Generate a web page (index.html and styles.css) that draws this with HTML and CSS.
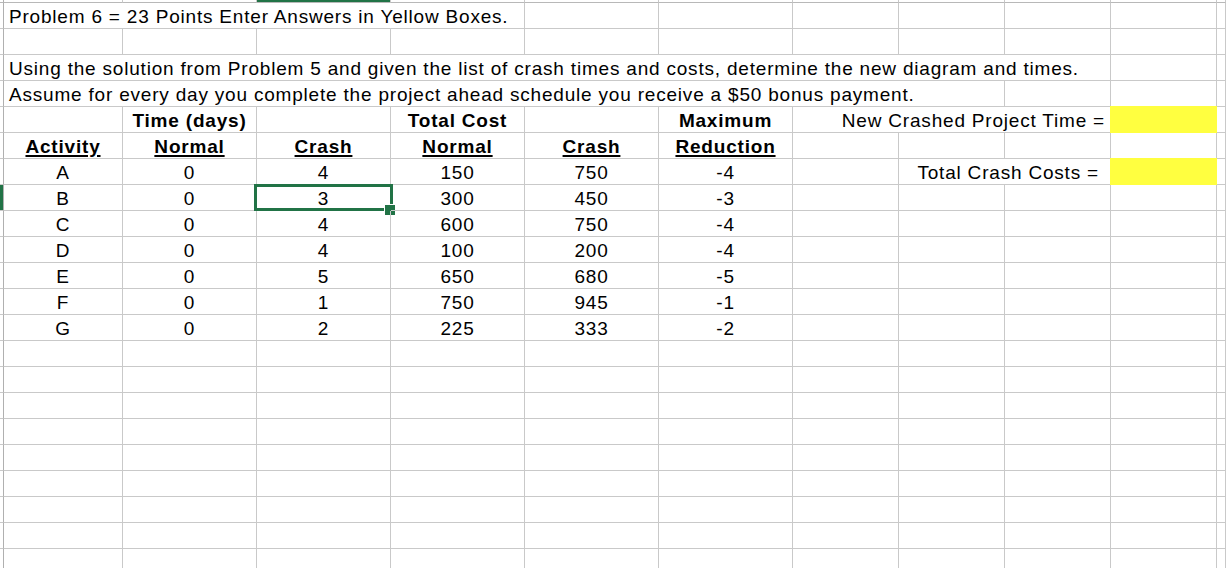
FILE: index.html
```html
<!DOCTYPE html>
<html>
<head>
<meta charset="utf-8">
<title>Problem 6</title>
<link rel="stylesheet" href="styles.css">
</head>
<body>
<div class="sheet">
  <div class="row hdr">
    <div class="c rh"></div><div class="c"></div><div class="c"></div><div class="c sel-col"></div><div class="c"></div><div class="c"></div><div class="c"></div><div class="c"></div><div class="c"></div><div class="c"></div><div class="c"></div><div class="c"></div>
  </div>
  <div class="row">
    <div class="c rh"></div><div class="c left s4">Problem 6 = 23 Points Enter Answers in Yellow Boxes.</div><div class="c"></div><div class="c"></div><div class="c"></div><div class="c"></div><div class="c"></div><div class="c"></div><div class="c"></div>
  </div>
  <div class="row">
    <div class="c rh"></div><div class="c"></div><div class="c"></div><div class="c"></div><div class="c"></div><div class="c"></div><div class="c"></div><div class="c"></div><div class="c"></div><div class="c"></div><div class="c"></div><div class="c"></div>
  </div>
  <div class="row">
    <div class="c rh"></div><div class="c left s9">Using the solution from Problem 5 and given the list of crash times and costs, determine the new diagram and times.</div><div class="c"></div><div class="c"></div>
  </div>
  <div class="row">
    <div class="c rh"></div><div class="c left s8">Assume for every day you complete the project ahead schedule you receive a $50 bonus payment.</div><div class="c"></div><div class="c"></div><div class="c"></div>
  </div>
  <div class="row">
    <div class="c rh"></div><div class="c"></div><div class="c b">Time (days)</div><div class="c"></div><div class="c b">Total Cost</div><div class="c"></div><div class="c b">Maximum</div><div class="c right s3">New Crashed Project Time =</div><div class="c answer"></div><div class="c"></div>
  </div>
  <div class="row">
    <div class="c rh"></div><div class="c b u">Activity</div><div class="c b u">Normal</div><div class="c b u">Crash</div><div class="c b u">Normal</div><div class="c b u">Crash</div><div class="c b u">Reduction</div><div class="c"></div><div class="c"></div><div class="c"></div><div class="c"></div><div class="c"></div>
  </div>
  <div class="row">
    <div class="c rh"></div><div class="c">A</div><div class="c">0</div><div class="c">4</div><div class="c">150</div><div class="c">750</div><div class="c">-4</div><div class="c"></div><div class="c right s2">Total Crash Costs =&nbsp;</div><div class="c answer"></div><div class="c"></div>
  </div>
  <div class="row">
    <div class="c rh rh-sel"></div><div class="c">B</div><div class="c">0</div><div class="c active">3<span class="sel-box"><span class="handle"></span></span></div><div class="c">300</div><div class="c">450</div><div class="c">-3</div><div class="c"></div><div class="c"></div><div class="c"></div><div class="c"></div><div class="c"></div>
  </div>
  <div class="row">
    <div class="c rh"></div><div class="c">C</div><div class="c">0</div><div class="c">4</div><div class="c">600</div><div class="c">750</div><div class="c">-4</div><div class="c"></div><div class="c"></div><div class="c"></div><div class="c"></div><div class="c"></div>
  </div>
  <div class="row">
    <div class="c rh"></div><div class="c">D</div><div class="c">0</div><div class="c">4</div><div class="c">100</div><div class="c">200</div><div class="c">-4</div><div class="c"></div><div class="c"></div><div class="c"></div><div class="c"></div><div class="c"></div>
  </div>
  <div class="row">
    <div class="c rh"></div><div class="c">E</div><div class="c">0</div><div class="c">5</div><div class="c">650</div><div class="c">680</div><div class="c">-5</div><div class="c"></div><div class="c"></div><div class="c"></div><div class="c"></div><div class="c"></div>
  </div>
  <div class="row">
    <div class="c rh"></div><div class="c">F</div><div class="c">0</div><div class="c">1</div><div class="c">750</div><div class="c">945</div><div class="c">-1</div><div class="c"></div><div class="c"></div><div class="c"></div><div class="c"></div><div class="c"></div>
  </div>
  <div class="row">
    <div class="c rh"></div><div class="c">G</div><div class="c">0</div><div class="c">2</div><div class="c">225</div><div class="c">333</div><div class="c">-2</div><div class="c"></div><div class="c"></div><div class="c"></div><div class="c"></div><div class="c"></div>
  </div>
  <div class="row"><div class="c rh"></div><div class="c"></div><div class="c"></div><div class="c"></div><div class="c"></div><div class="c"></div><div class="c"></div><div class="c"></div><div class="c"></div><div class="c"></div><div class="c"></div><div class="c"></div></div>
  <div class="row"><div class="c rh"></div><div class="c"></div><div class="c"></div><div class="c"></div><div class="c"></div><div class="c"></div><div class="c"></div><div class="c"></div><div class="c"></div><div class="c"></div><div class="c"></div><div class="c"></div></div>
  <div class="row"><div class="c rh"></div><div class="c"></div><div class="c"></div><div class="c"></div><div class="c"></div><div class="c"></div><div class="c"></div><div class="c"></div><div class="c"></div><div class="c"></div><div class="c"></div><div class="c"></div></div>
  <div class="row"><div class="c rh"></div><div class="c"></div><div class="c"></div><div class="c"></div><div class="c"></div><div class="c"></div><div class="c"></div><div class="c"></div><div class="c"></div><div class="c"></div><div class="c"></div><div class="c"></div></div>
  <div class="row"><div class="c rh"></div><div class="c"></div><div class="c"></div><div class="c"></div><div class="c"></div><div class="c"></div><div class="c"></div><div class="c"></div><div class="c"></div><div class="c"></div><div class="c"></div><div class="c"></div></div>
  <div class="row"><div class="c rh"></div><div class="c"></div><div class="c"></div><div class="c"></div><div class="c"></div><div class="c"></div><div class="c"></div><div class="c"></div><div class="c"></div><div class="c"></div><div class="c"></div><div class="c"></div></div>
  <div class="row"><div class="c rh"></div><div class="c"></div><div class="c"></div><div class="c"></div><div class="c"></div><div class="c"></div><div class="c"></div><div class="c"></div><div class="c"></div><div class="c"></div><div class="c"></div><div class="c"></div></div>
  <div class="row"><div class="c rh"></div><div class="c"></div><div class="c"></div><div class="c"></div><div class="c"></div><div class="c"></div><div class="c"></div><div class="c"></div><div class="c"></div><div class="c"></div><div class="c"></div><div class="c"></div></div>
  <div class="row"><div class="c rh"></div><div class="c"></div><div class="c"></div><div class="c"></div><div class="c"></div><div class="c"></div><div class="c"></div><div class="c"></div><div class="c"></div><div class="c"></div><div class="c"></div><div class="c"></div></div>
</div>
</body>
</html>
```
FILE: styles.css
```css
html, body {
  margin: 0;
  padding: 0;
  background: #fff;
  overflow: hidden;
}

.sheet {
  width: 1226px;
  height: 568px;
  overflow: hidden;
  font-family: "Liberation Sans", Arial, sans-serif;
  font-size: 19px;
  letter-spacing: 0.8px;
  color: #000;
}

.row {
  display: grid;
  grid-template-columns: 4px 119px repeat(5, 134px) repeat(4, 106px) 1fr;
  height: 26px;
}

.row.hdr {
  height: 3px;
}

.c {
  box-sizing: border-box;
  border-right: 1px solid #c9c9c9;
  border-bottom: 1px solid #c9c9c9;
  display: flex;
  align-items: flex-end;
  justify-content: center;
  white-space: pre;
  line-height: 20px;
  padding-bottom: 1px;
  position: relative;
  min-width: 0;
}

.hdr .c {
  border-bottom-color: #b8b8b8;
  padding: 0;
}

.rh {
  border-right: 1px solid #b0b0b0;
}

.rh-sel {
  background: #217346;
}

.sel-col {
  background: #217346;
}

.left {
  justify-content: flex-start;
  padding-left: 5px;
}

.right {
  justify-content: flex-end;
  padding-right: 5px;
}

.s2 { grid-column: span 2; }
.s3 { grid-column: span 3; }
.s4 { grid-column: span 4; }
.s8 { grid-column: span 8; }
.s9 { grid-column: span 9; }

.b {
  font-weight: bold;
}

.u {
  text-decoration: underline;
  text-decoration-thickness: 2px;
  text-underline-offset: 2px;
}

.answer::before {
  content: "";
  position: absolute;
  left: -1px;
  right: -1px;
  top: -1px;
  bottom: -1px;
  background: #ffff40;
}

.sel-box {
  position: absolute;
  left: -3px;
  right: -3px;
  top: -1px;
  bottom: -1px;
  border: 3px solid #217346;
}

.handle {
  position: absolute;
  right: -6px;
  bottom: -8px;
  width: 10px;
  height: 10px;
  background: #217346;
  border: 1px solid #fff;
}
```
